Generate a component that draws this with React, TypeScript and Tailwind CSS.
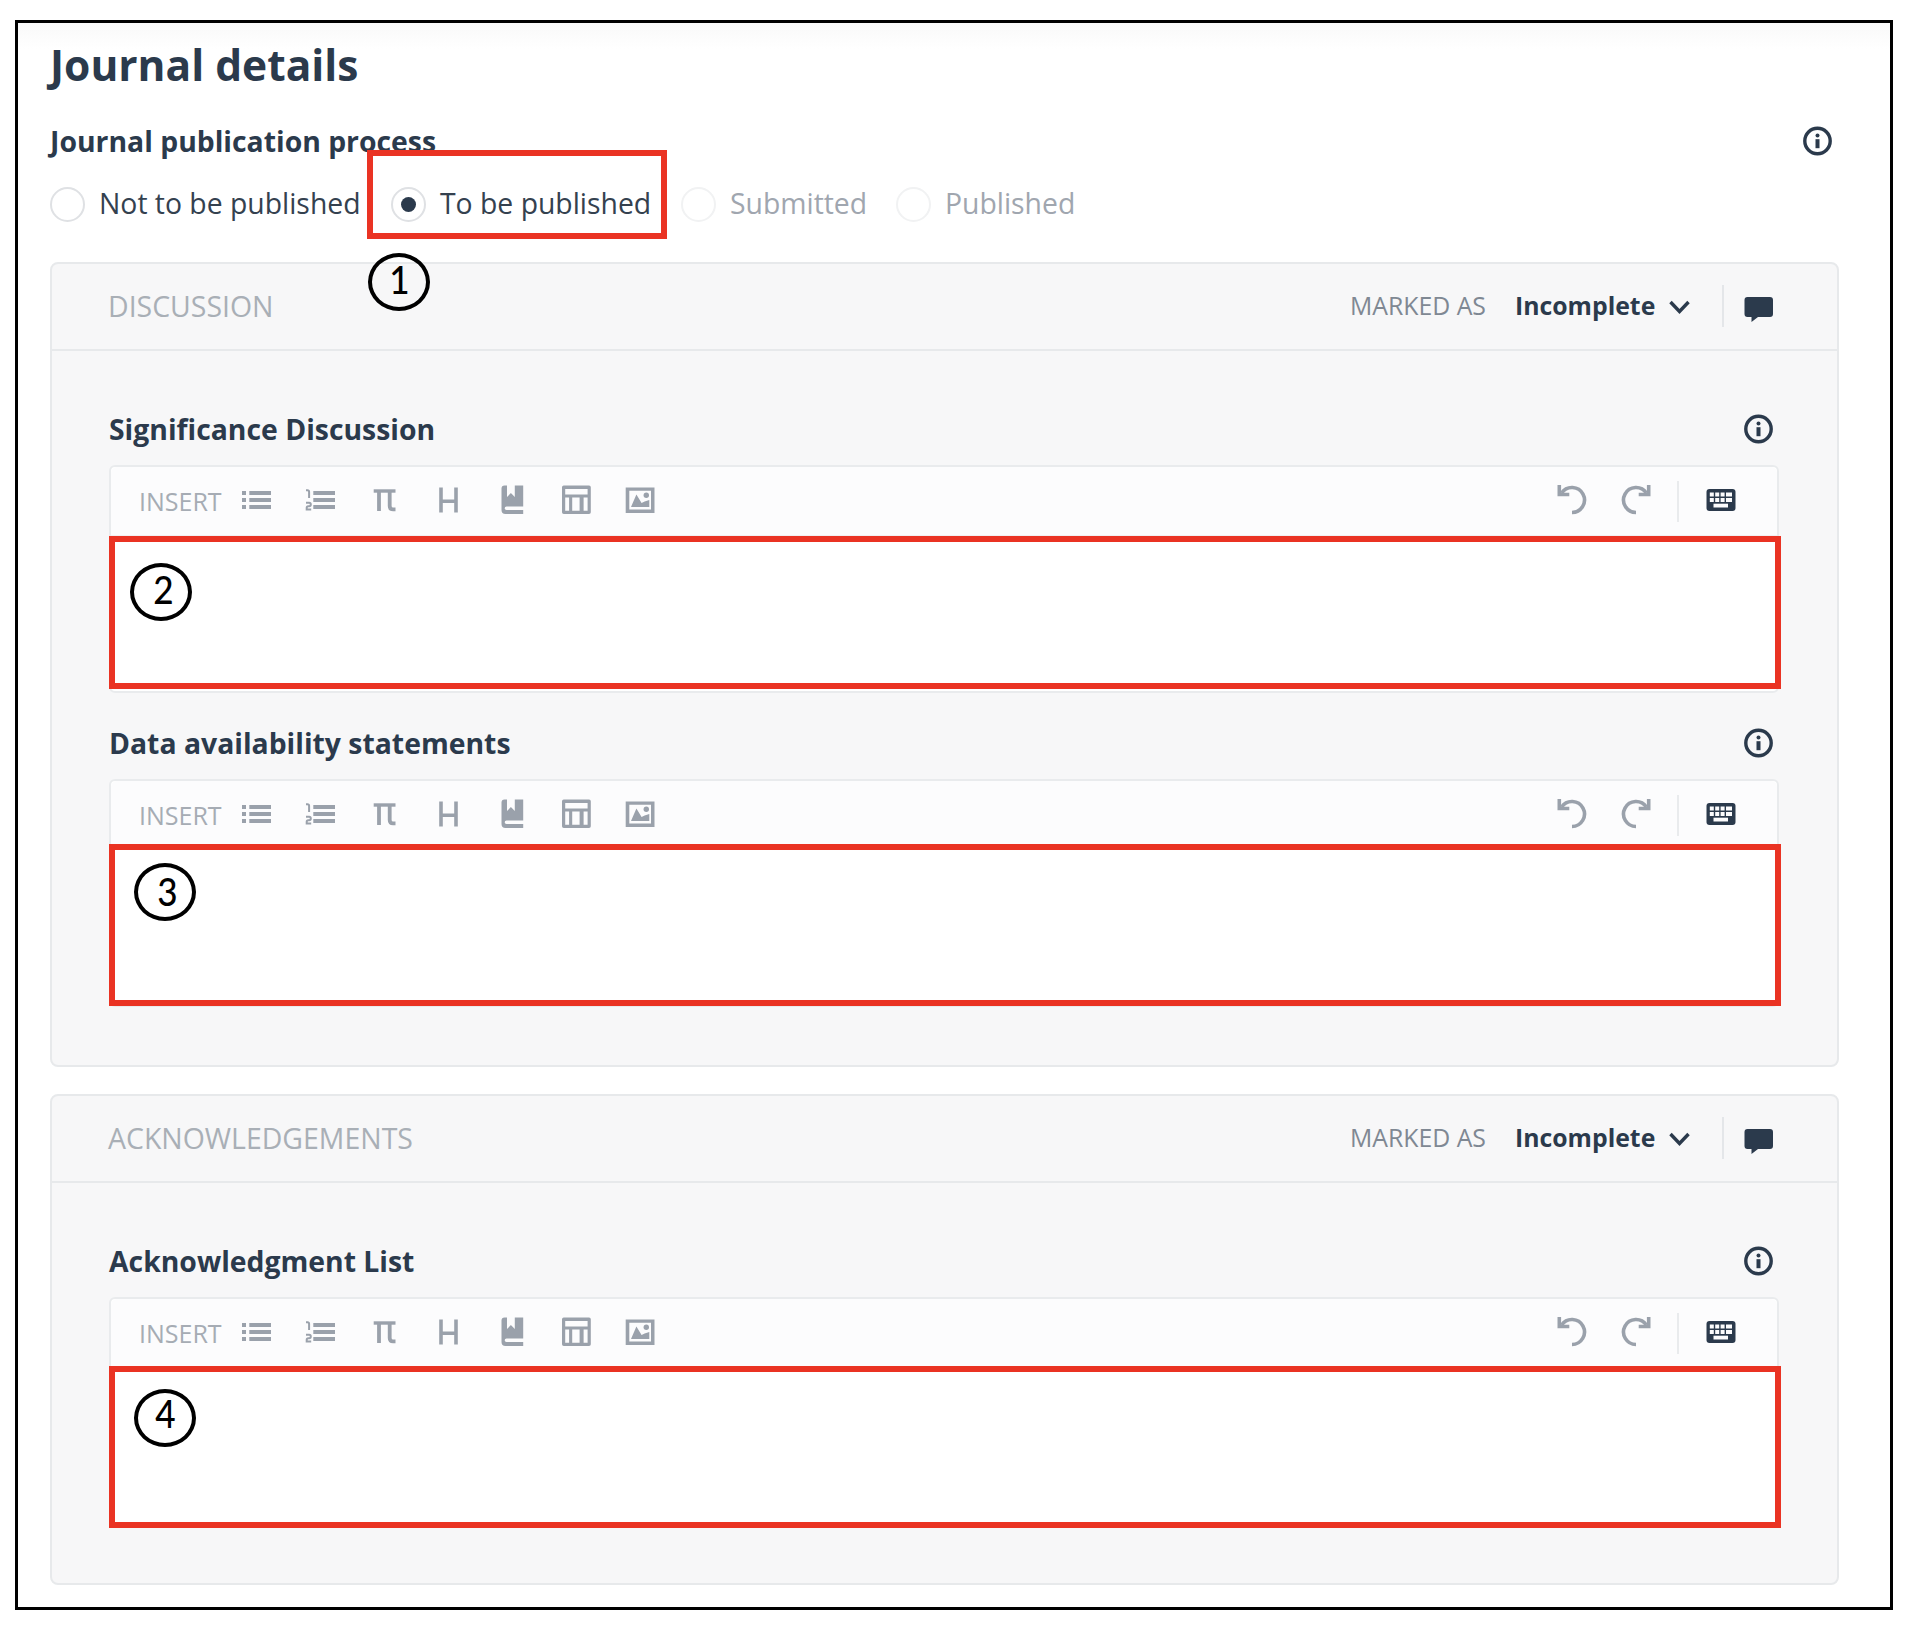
import React from "react";

const NAVY = "#2b3a4c";
const GREY = "#9aa1ab";

function InfoIcon() {
  return (
    <svg width="30" height="30" viewBox="0 0 30 30" fill="none">
      <circle cx="14.500" cy="15" r="12.700" stroke={NAVY} strokeWidth="3.400" />
      <circle cx="14.500" cy="9.400" r="2" fill={NAVY} />
      <rect x="12.500" y="13.200" width="4" height="9" fill={NAVY} />
    </svg>
  );
}

function CommentIcon() {
  return (
    <svg width="30" height="24" viewBox="0 0 30 24" fill={NAVY}>
      <path d="M3.500 1h22.500a3 3 0 0 1 3 3v14a3 3 0 0 1-3 3H14l-6.500 5v-5H3.500a3 3 0 0 1-3-3V4a3 3 0 0 1 3-3z" />
    </svg>
  );
}

function Chevron() {
  return (
    <svg width="22" height="14" viewBox="0 0 22 14" fill="none" stroke={NAVY} strokeWidth="3.400">
      <path d="M1.500 2l9 9.500L19.500 2" />
    </svg>
  );
}

function BulletIcon() {
  return (
    <svg width="32" height="32" viewBox="0 0 32 32" fill={GREY}>
      <rect x="1" y="7" width="4" height="4" />
      <rect x="1" y="14" width="4" height="4" />
      <rect x="1" y="21" width="4" height="4" />
      <rect x="8.300" y="7" width="21.700" height="4" />
      <rect x="8.300" y="14" width="21.700" height="4" />
      <rect x="8.300" y="21" width="21.700" height="4" />
    </svg>
  );
}

function NumberedIcon() {
  return (
    <svg width="32" height="32" viewBox="0 0 32 32" fill={GREY}>
      <path d="M1 6.200h1.500q1.600 0 1.600 1.600v6.200" fill="none" stroke={GREY} strokeWidth="2" />
      <path d="M1 18.800h3.200q1.600 0 1.600 1.700t-1.600 1.700H3.200q-1.500 0-1.500 1.500v1.700h4.500" fill="none" stroke={GREY} strokeWidth="2" />
      <rect x="8.300" y="7" width="21.700" height="4" />
      <rect x="8.300" y="14" width="21.700" height="4" />
      <rect x="8.300" y="21" width="21.700" height="4" />
    </svg>
  );
}

function PiIcon() {
  return (
    <svg width="32" height="32" viewBox="0 0 32 32" fill="none" stroke={GREY}>
      <path d="M4.700 7h21.800" strokeWidth="3.400" />
      <path d="M10 7v20" strokeWidth="3.800" />
      <path d="M20.700 7v15q0 3.400 3.400 3.400h2.400" strokeWidth="3.800" />
    </svg>
  );
}

function HeadingIcon() {
  return (
    <svg width="32" height="32" viewBox="0 0 32 32" fill="none" stroke={GREY} strokeWidth="3.600">
      <path d="M8 3.500v25M23 3.500v25M8 17.300h15" />
    </svg>
  );
}

function BookIcon() {
  return (
    <svg width="32" height="32" viewBox="0 0 32 32" fill={GREY}>
      <path d="M7.500 1.500H10V13l3.900-4 3.900 4V1.500h8.400v21H9.500a1.800 1.800 0 0 0 0 3.600h16.700V30H8.500a4 4 0 0 1-4-4V4.500a3 3 0 0 1 3-3z" />
    </svg>
  );
}

function TableIcon() {
  return (
    <svg width="32" height="32" viewBox="0 0 32 32" fill={GREY}>
      <path
        fillRule="evenodd"
        d="M2.800 1.500h25.200a1.800 1.800 0 0 1 1.800 1.800v25a1.800 1.800 0 0 1-1.800 1.800H2.800A1.800 1.800 0 0 1 1 28.300v-25a1.800 1.800 0 0 1 1.800-1.800zM4.200 5v5.500h22.400V5zM4.200 13.500v13.300h3.900V13.500zM11.200 13.500v13.300h7.400V13.500zM22.600 13.500v13.300h4V13.500z"
      />
    </svg>
  );
}

function PictureIcon() {
  return (
    <svg width="32" height="32" viewBox="0 0 32 32" fill={GREY}>
      <path fillRule="evenodd" d="M.700 3.500H29.500v25.400H.700zM4.300 6.800v18.800h21.700V6.800z" />
      <path d="M6 23l5.400-12.500 5.200 8.500 3-1.500 4.700-1.500V23z" />
      <circle cx="21.300" cy="11.300" r="2.700" />
    </svg>
  );
}

function UndoIcon() {
  return (
    <svg width="30" height="30" viewBox="0 0 30 30" fill="none" stroke={GREY}>
      <path d="M15 27.500A12.500 12.500 0 1 0 4.600 8" strokeWidth="3.600" />
      <path d="M2.300 0v9.500h10" strokeWidth="3.600" />
    </svg>
  );
}

function KeyboardIcon() {
  return (
    <svg width="30" height="22" viewBox="0 0 30 22">
      <rect x="0.500" y="0" width="29" height="22" rx="3" fill={NAVY} />
      <g fill="#fcfcfd">
        <rect x="3.800" y="3.500" width="4" height="4" />
        <rect x="9.200" y="3.500" width="4" height="4" />
        <rect x="14.600" y="3.500" width="4" height="4" />
        <rect x="20" y="3.500" width="6" height="4" />
        <rect x="3.800" y="9" width="4" height="4" />
        <rect x="9.200" y="9" width="4" height="4" />
        <rect x="14.600" y="9" width="4" height="4" />
        <rect x="20" y="9" width="6" height="4" />
        <rect x="7.500" y="14.700" width="14.500" height="3.800" />
      </g>
    </svg>
  );
}

function Radio({ label, checked, disabled, className }: { label: string; checked?: boolean; disabled?: boolean; className: string }) {
  return (
    <label className={`flex shrink-0 items-center whitespace-nowrap ${className}`}>
      <span
        className={`flex size-[35px] shrink-0 items-center justify-center rounded-full border-2 bg-white ${
          disabled ? "border-[#f1f2f3]" : "border-[#dfe1e4]"
        }`}
      >
        {checked && <span className="size-[15px] rounded-full bg-[#2b3a4c]" />}
      </span>
      <span className={`-mt-[3px] ml-[14px] text-[28.350px] leading-[36px] ${disabled ? "text-[#a0a6af]" : "text-[#34414f]"}`}>{label}</span>
    </label>
  );
}

function Editor({ title, className }: { title: string; className: string }) {
  return (
    <div className={className}>
      <div className="flex h-[36px] items-center justify-between pr-[5px]">
        <h3 className="text-[28.350px] leading-[36px] font-bold whitespace-nowrap text-[#2b3a4c]">{title}</h3>
        <InfoIcon />
      </div>
      <div className="mt-[18px] flex h-[228px] flex-col rounded-md border-2 border-[#e9ebed] bg-white">
        <div className="flex h-[70px] shrink-0 items-center justify-between rounded-t-md border-b-2 border-[#f0f1f3] bg-[#fcfcfd] pr-[41px] pl-[28px]">
          <div className="flex items-center">
            <span className="-mt-px w-[102px] text-[25px] leading-[34px] text-[#a6acb4]">INSERT</span>
            <div className="-mt-[2px] flex gap-8">
              <BulletIcon />
              <NumberedIcon />
              <PiIcon />
              <HeadingIcon />
              <BookIcon />
              <TableIcon />
              <PictureIcon />
            </div>
          </div>
          <div className="flex items-center">
            <span className="-mt-[2px] flex gap-[34px]">
              <UndoIcon />
              <span className="-scale-x-100">
                <UndoIcon />
              </span>
            </span>
            <span className="ml-[26px] h-[41px] w-[2px] bg-[#e9ebed]" />
            <span className="-mt-[2px] ml-[27px]">
              <KeyboardIcon />
            </span>
          </div>
        </div>
      </div>
    </div>
  );
}

function Section({ title, className, children }: { title: string; className: string; children: React.ReactNode }) {
  return (
    <section className={`rounded-lg border-2 border-[#e7e9eb] bg-[#f7f7f8] ${className}`}>
      <header className="flex h-[87px] items-center justify-between border-b-2 border-[#e7e9eb] pr-[63px] pl-[56px]">
        <h2 className="-mt-[2px] text-[28.450px] leading-[36px] text-[#a9afb6]">{title}</h2>
        <div className="flex items-center">
          <span className="-mt-[3px] w-[165px] text-[24.800px] leading-[34px] whitespace-nowrap text-[#7f8893]">MARKED AS</span>
          <span className="-mt-[3px] w-[154px] text-[24.800px] leading-[34px] font-bold text-[#2b3a4c]">Incomplete</span>
          <Chevron />
          <span className="-mt-px ml-[31px] h-[42px] w-[2px] bg-[#e4e6e9]" />
          <span className="mt-[2px] ml-[20px] [&>svg]:overflow-visible">
            <CommentIcon />
          </span>
        </div>
      </header>
      <div className="pr-[58px] pb-[58px] pl-[57px]">{children}</div>
    </section>
  );
}

function Marker({ n, className, digit }: { n: number; className: string; digit: string }) {
  return (
    <div className={`absolute h-[58px] w-[62px] rounded-[50%] border-4 border-black ${className}`}>
      <span className={`absolute scale-x-90 font-[Lato,sans-serif] text-[39px] leading-[40px] font-medium text-black ${digit}`}>{n}</span>
    </div>
  );
}

export default function App() {
  return (
    <div className="relative h-[1626px] w-[1914px] overflow-hidden bg-white pt-[20px] pl-[15px] font-['Open_Sans',sans-serif]">
      <main className="h-[1590px] w-[1878px] border-[3px] border-black bg-linear-to-b from-[#f9f9f9] to-white to-[26px] pr-[51px] pl-[32px]">
        <h1 className="pt-[14px] text-[42.500px] leading-[56px] font-bold text-[#2b3a4c]">Journal details</h1>
        <div className="mt-[30px] flex h-[36px] items-center justify-between pr-[6px]">
          <h2 className="text-[28.350px] leading-[36px] font-bold text-[#2b3a4c]">Journal publication process</h2>
          <InfoIcon />
        </div>
        <div className="mt-[28px] flex h-[35px] items-center">
          <Radio label="Not to be published" className="w-[341px]" />
          <Radio label="To be published" checked className="w-[290px]" />
          <Radio label="Submitted" disabled className="w-[215px]" />
          <Radio label="Published" disabled className="w-[215px]" />
        </div>
        <Section title="DISCUSSION" className="mt-[40px] h-[805px] w-[1789px]">
          <Editor title="Significance Discussion" className="mt-[60px]" />
          <Editor title="Data availability statements" className="mt-[32px]" />
        </Section>
        <Section title="ACKNOWLEDGEMENTS" className="mt-[27px] h-[491px] w-[1789px]">
          <Editor title="Acknowledgment List" className="mt-[60px]" />
        </Section>
      </main>

      <div className="absolute top-[150px] left-[367px] h-[89px] w-[300px] border-6 border-[#ea3323]" />
      <div className="absolute top-[536px] left-[109px] h-[153px] w-[1672px] border-6 border-[#ea3323]" />
      <div className="absolute top-[844px] left-[109px] h-[162px] w-[1672px] border-6 border-[#ea3323] bg-white" />
      <div className="absolute top-[1366px] left-[109px] h-[162px] w-[1672px] border-6 border-[#ea3323] bg-white" />
      <Marker n={1} className="top-[253px] left-[368px]" digit="top-[2px] left-[16px]" />
      <Marker n={2} className="top-[563px] left-[130px]" digit="top-[2px] left-[18px]" />
      <Marker n={3} className="top-[863px] left-[134px]" digit="top-[4px] left-[18px]" />
      <Marker n={4} className="top-[1389px] left-[134px]" digit="top-0 left-[16px]" />
    </div>
  );
}
